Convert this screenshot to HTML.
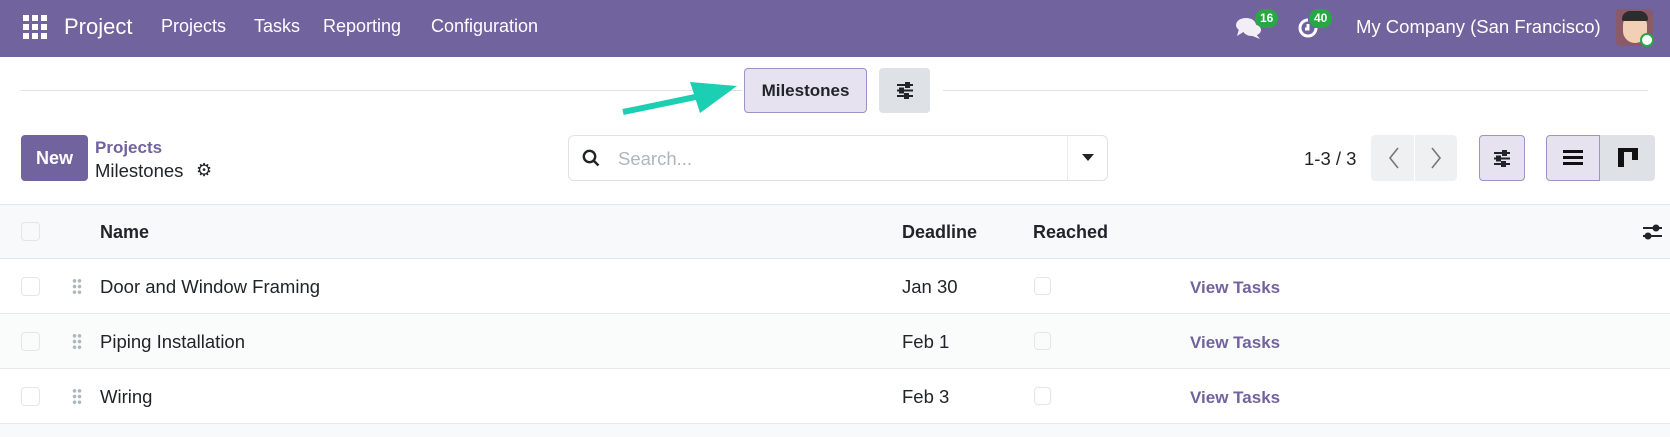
<!DOCTYPE html>
<html><head><meta charset="utf-8"><style>
*{box-sizing:border-box;margin:0;padding:0}
body{width:1670px;height:437px;overflow:hidden;background:#fff;font-family:"Liberation Sans",sans-serif;color:#212529;position:relative}
.abs{position:absolute}
.nav{left:0;top:0;width:1670px;height:57px;background:#71639e}
.nav .t{color:#fff;font-size:18px;top:16px}
.badge{background:#28a745;color:#fff;font-size:12px;font-weight:bold;border-radius:10px;height:19px;line-height:19px;padding:0 5px;top:9px}
.line{height:1px;background:#dee2e6;top:90px}
.btn{border-radius:4px}
.row{left:0;width:1670px;height:55px;border-bottom:1px solid #e6e8ea}
.cb{width:19px;height:19px;border:1px solid #e3e5e8;border-radius:4px;background:#fff}
.txt{font-size:18.5px;line-height:20px}
.vt{color:#71639e;font-weight:bold;font-size:17px}
.drag{width:10px;height:17px;background:radial-gradient(circle,#adb5bd 1.6px,transparent 2px) 0 0/5px 5.7px}
</style></head><body>
<div class="abs nav">
  <svg class="abs" style="left:23px;top:15px" width="24" height="24" viewBox="0 0 24 24" fill="#fff"><rect x="0" y="0" width="6" height="6"/><rect x="9" y="0" width="6" height="6"/><rect x="18" y="0" width="6" height="6"/><rect x="0" y="9" width="6" height="6"/><rect x="9" y="9" width="6" height="6"/><rect x="18" y="9" width="6" height="6"/><rect x="0" y="18" width="6" height="6"/><rect x="9" y="18" width="6" height="6"/><rect x="18" y="18" width="6" height="6"/></svg>
  <div class="abs t" style="left:64px;top:14px;font-size:22px">Project</div>
  <div class="abs t" style="left:161px">Projects</div>
  <div class="abs t" style="left:254px">Tasks</div>
  <div class="abs t" style="left:323px">Reporting</div>
  <div class="abs t" style="left:431px">Configuration</div>
  <svg class="abs" style="left:1236px;top:16px" width="26" height="24" viewBox="0 0 26 24" fill="#fff" opacity=".9"><ellipse cx="10" cy="9" rx="10" ry="7"/><path d="M3 13 L1 20 L9 15Z"/><ellipse cx="16" cy="14" rx="9" ry="6"/><path d="M20 18 L24 23 L14 19Z"/></svg>
  <div class="abs badge" style="left:1255px">16</div>
  <svg class="abs" style="left:1296px;top:16px" width="24" height="24" viewBox="0 0 24 24" fill="none" stroke="#fff" stroke-width="3"><path d="M20 12 A8 8 0 1 1 12 4"/><path d="M12 8 V13 H9"/></svg>
  <div class="abs badge" style="left:1309px">40</div>
  <div class="abs t" style="left:1356px;top:16px;font-size:18.5px">My Company (San Francisco)</div>
  <div class="abs" style="left:1616px;top:9px;width:37px;height:37px;background:#8a5a6a;border-radius:4px"><div class="abs" style="left:7px;top:6px;width:24px;height:28px;background:#f1d0b5;border-radius:10px 10px 12px 12px"></div><div class="abs" style="left:6px;top:2px;width:26px;height:10px;background:#2d2d2d;border-radius:8px 8px 2px 2px"></div><div class="abs" style="left:24px;top:24px;width:14px;height:14px;background:#fff;border-radius:50%;border:2px solid #28a745"></div></div>
</div>
<div class="abs line" style="left:21px;width:721px"></div>
<div class="abs line" style="left:943px;width:705px"></div>
<div class="abs btn" style="left:744px;top:68px;width:123px;height:45px;background:#e6e2ef;border:1px solid #9d93c4;font-weight:bold;font-size:17px;line-height:43px;text-align:center">Milestones</div>
<div class="abs btn" style="left:879px;top:68px;width:51px;height:45px;background:#dee2e6"></div>
<svg class="abs" style="left:896px;top:82px" width="18" height="17" viewBox="0 0 18 17" stroke="#212529" stroke-width="2"><path d="M1 3H17M1 8.5H17M1 14H17"/><rect x="10" y="1" width="3" height="4" fill="#212529"/><rect x="4" y="6.5" width="3" height="4" fill="#212529"/><rect x="9" y="12" width="3" height="4" fill="#212529"/></svg>
<svg class="abs" style="left:620px;top:80px" width="120" height="36" viewBox="0 0 120 36"><path d="M3 32 L85 15" stroke="#1ccfb3" stroke-width="6"/><path d="M70 2 L117 6 L80 33Z" fill="#1ccfb3"/></svg>
<div class="abs btn" style="left:21px;top:135px;width:67px;height:46px;background:#71639e;color:#fff;font-weight:bold;font-size:18px;line-height:46px;text-align:center">New</div>
<div class="abs" style="left:95px;top:138px;color:#71639e;font-weight:bold;font-size:17px">Projects</div>
<div class="abs txt" style="left:95px;top:161px">Milestones</div>
<div class="abs" style="left:196px;top:160px;font-size:18px">⚙</div>
<div class="abs btn" style="left:568px;top:135px;width:540px;height:46px;border:1px solid #dee2e6;border-radius:6px"></div>
<div class="abs" style="left:1067px;top:136px;width:1px;height:44px;background:#e9ecef"></div>
<svg class="abs" style="left:582px;top:149px" width="18" height="18" viewBox="0 0 18 18" fill="none" stroke="#212529" stroke-width="2.4"><circle cx="7.5" cy="7.5" r="5.7"/><path d="M11.5 11.5 L16.5 16.5"/></svg>
<div class="abs txt" style="left:618px;top:149px;color:#adb5bd">Search...</div>
<svg class="abs" style="left:1082px;top:154px" width="12" height="8"><path d="M0 0H12L6 7Z" fill="#212529"/></svg>
<div class="abs txt" style="left:1304px;top:149px">1-3 / 3</div>
<div class="abs btn" style="left:1371px;top:135px;width:86px;height:46px;background:#eff0f2"></div>
<div class="abs" style="left:1414px;top:135px;width:1px;height:46px;background:#fff"></div>
<svg class="abs" style="left:1386px;top:147px" width="60" height="22" fill="none" stroke="#777" stroke-width="1.6"><path d="M12 1 L4 11 L12 21"/><path d="M46 1 L54 11 L46 21"/></svg>
<div class="abs btn" style="left:1479px;top:135px;width:46px;height:46px;background:#e6e2ef;border:1px solid #9d93c4"></div>
<svg class="abs" style="left:1493px;top:150px" width="18" height="17" viewBox="0 0 18 17" stroke="#212529" stroke-width="2"><path d="M1 3H17M1 8.5H17M1 14H17"/><rect x="10" y="1" width="3" height="4" fill="#212529"/><rect x="4" y="6.5" width="3" height="4" fill="#212529"/><rect x="9" y="12" width="3" height="4" fill="#212529"/></svg>
<div class="abs btn" style="left:1546px;top:135px;width:54px;height:46px;background:#e6e2ef;border:1px solid #9d93c4;border-radius:4px 0 0 4px"></div>
<div class="abs btn" style="left:1600px;top:135px;width:55px;height:46px;background:#dee2e6;border-radius:0 4px 4px 0"></div>
<svg class="abs" style="left:1563px;top:149px" width="20" height="17"><rect y="1" width="20" height="3" fill="#111"/><rect y="7" width="20" height="3" fill="#111"/><rect y="13" width="20" height="3" fill="#111"/></svg>
<svg class="abs" style="left:1618px;top:148px" width="20" height="19"><rect width="20" height="4" fill="#111"/><rect width="6" height="19" fill="#111"/><rect x="14" width="6" height="12" fill="#111"/></svg>
<div class="abs" style="left:0;top:204px;width:1670px;height:55px;background:#f8f9fa;border-top:1px solid #e3e5e8;border-bottom:1px solid #e3e5e8"></div>
<div class="abs cb" style="left:21px;top:222px;background:#f8f9fa"></div>
<div class="abs txt" style="left:100px;top:222px;font-weight:bold;font-size:18px">Name</div>
<div class="abs txt" style="left:902px;top:222px;font-weight:bold;font-size:18px">Deadline</div>
<div class="abs txt" style="left:1033px;top:222px;font-weight:bold;font-size:18px">Reached</div>
<svg class="abs" style="left:1643px;top:223px" width="19" height="18" viewBox="0 0 19 18" stroke="#212529" stroke-width="2"><path d="M0 5H19M0 13H19"/><circle cx="13" cy="5" r="2.5" fill="#212529"/><circle cx="5" cy="13" r="2.5" fill="#212529"/></svg>
<div class="abs row" style="top:259px;background:#fff"></div>
<div class="abs row" style="top:314px;background:#fafbfb"></div>
<div class="abs row" style="top:369px;background:#fff"></div>
<div class="abs" style="left:0;top:424px;width:1670px;height:13px;background:#f8f9fa"></div>
<div class="abs cb" style="left:21px;top:277px"></div><div class="abs drag" style="left:72px;top:278px"></div>
<div class="abs txt" style="left:100px;top:277px">Door and Window Framing</div><div class="abs txt" style="left:902px;top:277px">Jan 30</div>
<div class="abs cb" style="left:1034px;top:277px;width:17px;height:18px"></div><div class="abs vt" style="left:1190px;top:278px">View Tasks</div>
<div class="abs cb" style="left:21px;top:332px;background:#fafbfb"></div><div class="abs drag" style="left:72px;top:333px"></div>
<div class="abs txt" style="left:100px;top:332px">Piping Installation</div><div class="abs txt" style="left:902px;top:332px">Feb 1</div>
<div class="abs cb" style="left:1034px;top:332px;width:17px;height:18px;background:#fafbfb"></div><div class="abs vt" style="left:1190px;top:333px">View Tasks</div>
<div class="abs cb" style="left:21px;top:387px"></div><div class="abs drag" style="left:72px;top:388px"></div>
<div class="abs txt" style="left:100px;top:387px">Wiring</div><div class="abs txt" style="left:902px;top:387px">Feb 3</div>
<div class="abs cb" style="left:1034px;top:387px;width:17px;height:18px"></div><div class="abs vt" style="left:1190px;top:388px">View Tasks</div>
</body></html>
